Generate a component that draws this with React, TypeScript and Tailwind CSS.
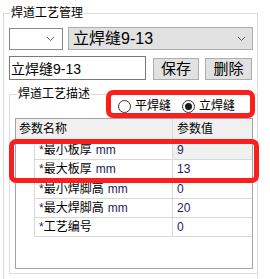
import React from 'react';

const rows = [
  { name: '最小板厚', unit: 'mm', value: '9', h: 'h-[20px]', current: true },
  { name: '最大板厚', unit: 'mm', value: '13', h: 'h-[19px]', current: false },
  { name: '最小焊脚高', unit: 'mm', value: '0', h: 'h-[20px]', current: false },
  { name: '最大焊脚高', unit: 'mm', value: '20', h: 'h-[19px]', current: false },
  { name: '工艺编号', unit: '', value: '0', h: 'h-[19px]', current: false },
];

function Chevron() {
  return (
    <svg width="9" height="6" viewBox="0 0 9 6" className="shrink-0">
      <polyline points="1,1 4.5,4.5 8,1" fill="none" stroke="#5a5a5a" strokeWidth="1" />
    </svg>
  );
}

function Radio({ label, checked }: { label: string; checked?: boolean }) {
  return (
    <div className="flex items-center gap-[4px]">
      <span className="flex h-[13px] w-[13px] items-center justify-center rounded-full border border-[#333333] bg-white">
        {checked && <span className="h-[7px] w-[7px] rounded-full bg-[#1a1a1a]"></span>}
      </span>
      <span className="text-[12px] leading-[16px] text-black">{label}</span>
    </div>
  );
}

export default function App() {
  return (
    <div className="relative h-[279px] w-[270px] overflow-hidden bg-white font-['Liberation_Sans','Noto_Sans_CJK_SC',sans-serif]">
      {/* 焊道工艺管理 */}
      <div className="ml-[3px] mt-[13px] h-[300px] w-[255px] border border-[#dcdcdc]">
        <div className="-mt-[9px] ml-[6px] w-fit bg-white px-px text-[12px] leading-[16px] text-black">焊道工艺管理</div>

        <div className="ml-[5px] mt-[6px] flex items-start gap-[5px]">
          <div className="mt-px flex h-[22px] w-[54px] items-center justify-end border border-[#8a8a8a] bg-white pr-[7px]">
            <Chevron />
          </div>
          <div className="flex h-[23px] w-[185px] items-center justify-between border border-[#adadad] bg-[#e1e1e1] pl-[4px] pr-[6px]">
            <span className="text-[16px] leading-[20px] text-black">立焊缝9-13</span>
            <Chevron />
          </div>
        </div>

        <div className="ml-[5px] mt-[6px] flex items-start">
          <div className="flex h-[24px] w-[137px] items-center border border-[#7a7a7a] bg-white pl-px pt-[2px]">
            <span className="text-[14px] leading-[18px] text-black">立焊缝9-13</span>
          </div>
          <button className="ml-[7px] mt-[2px] flex h-[22px] w-[46px] items-center justify-center border border-[#adadad] bg-[#e1e1e1] text-[15px] leading-[18px] text-black">
            保存
          </button>
          <button className="ml-[6px] mt-[2px] flex h-[22px] w-[47px] items-center justify-center border border-[#adadad] bg-[#e1e1e1] text-[15px] leading-[18px] text-black">
            删除
          </button>
        </div>

        {/* 焊道工艺描述 */}
        <div className="ml-[5px] mt-[14px] h-[180px] w-[249px] border border-[#dcdcdc]">
          <div className="flex items-start">
            <div className="-mt-[9px] ml-[7px] w-fit bg-white px-px text-[12px] leading-[16px] text-black">焊道工艺描述</div>
            <div className="ml-[27px] mt-[3px] flex items-center gap-[11px]">
              <Radio label="平焊缝" />
              <Radio label="立焊缝" checked />
            </div>
          </div>

          <div className="ml-[5px] mt-[4px] flex h-[151px] w-[238px] flex-col border border-[#a3a3ad] bg-white">
            <div className="flex h-[21px] shrink-0 border-b border-[#d8d8d8] bg-[#f0f0f0] text-[12px] leading-[16px] text-black">
              <div className="flex w-[157px] items-center border-r border-[#d8d8d8] pl-[3px]">参数名称</div>
              <div className="flex flex-1 items-center pl-[4px]">参数值</div>
            </div>
            {rows.map((r) => (
              <div key={r.name} className={`flex shrink-0 ${r.h}`}>
                <div className="w-[19px] border-r border-[#d8d8d8]"></div>
                <div className="flex flex-1 border-b border-[#d8d8d8] text-[12px] leading-[16px]">
                  <div className="flex w-[138px] items-center border-r border-[#d8d8d8] pl-[4px]">
                    <span className="text-[#2a2260]">*</span>
                    <span className="text-black">{r.name}</span>
                    {r.unit && <span className="ml-[4px] text-[#1c1c5c]">{r.unit}</span>}
                  </div>
                  <div className={`flex flex-1 items-center pl-[4px] text-[#1c1c5c] ${r.current ? 'bg-[#f0f0f0]' : ''}`}>
                    {r.value}
                  </div>
                </div>
              </div>
            ))}
          </div>
        </div>
      </div>

      {/* red annotation boxes */}
      <div className="absolute left-[106px] top-[90px] h-[28px] w-[149px] rounded-[7px] border-[5px] border-[#fa1e1e]"></div>
      <div className="absolute left-[9px] top-[139px] h-[44px] w-[250px] rounded-[7px] border-[5px] border-[#fa1e1e]"></div>
    </div>
  );
}
